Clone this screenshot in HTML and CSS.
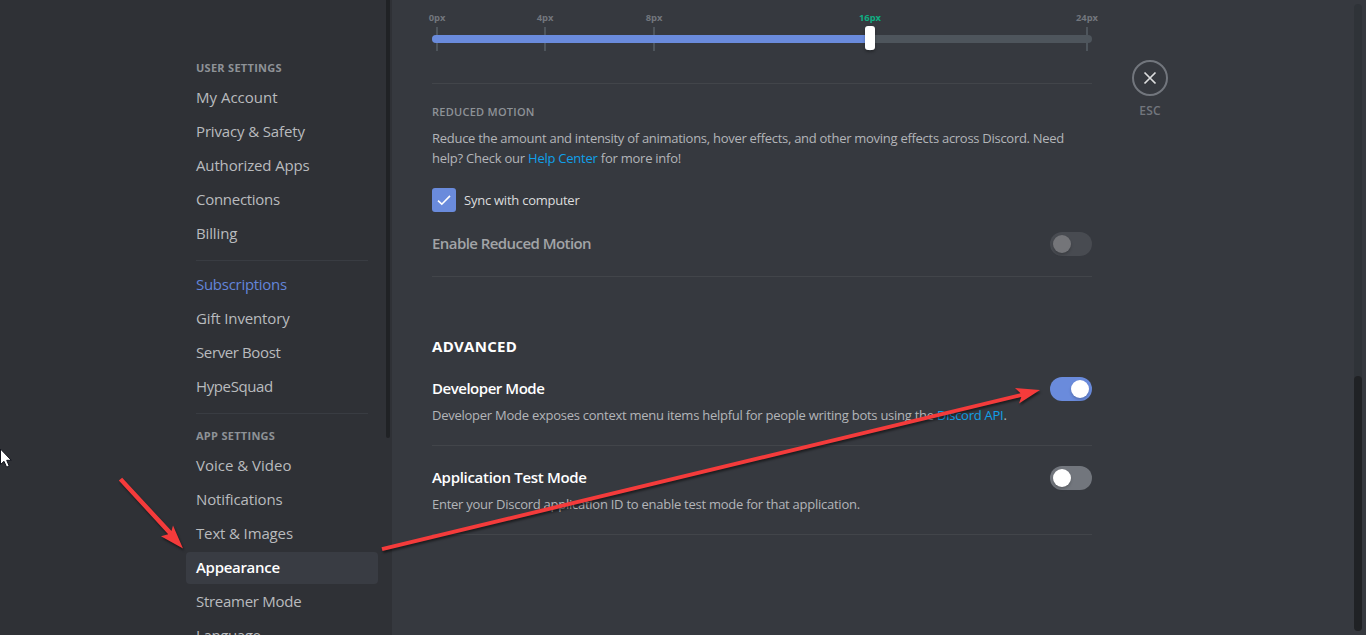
FILE: index.html
```html
<!DOCTYPE html>
<html lang="en">
<head>
<meta charset="utf-8">
<title>User Settings</title>
<link rel="stylesheet" href="styles.css">
</head>
<body>
<div class="app">
  <aside class="sidebar">
    <nav class="nav">
      <div class="nav-header">USER SETTINGS</div>
      <a class="nav-item">My Account</a>
      <a class="nav-item snug">Privacy &amp; Safety</a>
      <a class="nav-item snug">Authorized Apps</a>
      <a class="nav-item tight">Connections</a>
      <a class="nav-item snug">Billing</a>
      <div class="nav-sep"></div>
      <a class="nav-item tight brand">Subscriptions</a>
      <a class="nav-item snug">Gift Inventory</a>
      <a class="nav-item tighter">Server Boost</a>
      <a class="nav-item tighter">HypeSquad</a>
      <div class="nav-sep"></div>
      <div class="nav-header">APP SETTINGS</div>
      <a class="nav-item">Voice &amp; Video</a>
      <a class="nav-item snug">Notifications</a>
      <a class="nav-item snug">Text &amp; Images</a>
      <a class="nav-item snug selected">Appearance</a>
      <a class="nav-item tight">Streamer Mode</a>
      <a class="nav-item tighter">Language</a>
    </nav>
    <div class="side-scroll"></div>
  </aside>

  <main class="content">
    <div class="column">
      <section class="slider">
        <div class="marks">
          <div class="mark m0"><span>0px</span><i></i></div>
          <div class="mark m4"><span>4px</span><i></i></div>
          <div class="mark m8"><span>8px</span><i></i></div>
          <div class="mark m16 current"><span>16px</span><i></i></div>
          <div class="mark m24"><span>24px</span><i></i></div>
        </div>
        <div class="bar"><div class="fill"></div></div>
        <div class="grabber"></div>
      </section>

      <section class="motion">
        <h5 class="eyebrow">REDUCED MOTION</h5>
        <p class="desc"><span class="line1">Reduce the amount and intensity of animations, hover effects, and other moving effects across Discord. Need</span><br>help? Check our <a class="link">Help Center</a> for more info!</p>
        <div class="check-row">
          <span class="checkbox"><svg width="18" height="18" viewBox="0 0 18 18"><polyline points="3,9.6 6.8,13.2 15,4.9" fill="none" stroke="#fff" stroke-width="1.6"/></svg></span>
          <span class="check-label">Sync with computer</span>
        </div>
        <div class="setting disabled">
          <span class="setting-title enable">Enable Reduced Motion</span>
          <span class="switch"><span class="knob"></span></span>
        </div>
      </section>

      <h2 class="advanced">ADVANCED</h2>
      <section class="option first">
        <div class="setting">
          <span class="setting-title dev">Developer Mode</span>
          <span class="switch on"><span class="knob"></span></span>
        </div>
        <p class="desc">Developer Mode exposes context menu items helpful for people writing bots using the <a class="link">Discord API</a>.</p>
      </section>
      <section class="option">
        <div class="setting">
          <span class="setting-title app-test">Application Test Mode</span>
          <span class="switch"><span class="knob"></span></span>
        </div>
        <p class="desc">Enter your Discord application ID to enable test mode for that application.</p>
      </section>
    </div>

    <div class="close">
      <span class="close-ring"><svg width="18" height="18" viewBox="0 0 18 18"><path d="M3.5 3.5 14.5 14.5M14.5 3.5 3.5 14.5" stroke="#dcddde" stroke-width="1.7" fill="none"/></svg></span>
      <span class="esc">ESC</span>
    </div>
    <div class="main-scroll"><div class="thumb"></div></div>
  </main>

  <svg class="annotations" width="1366" height="635" viewBox="0 0 1366 635">
    <g class="arrows">
      <path d="M122.2 477.8 171.5 531 173 525.5 183 548.5 161 536.2 168.2 534.2 118.8 480.5Z"/>
      <path d="M381.5 547.2 1020.5 393.3 1015 388 1040 390 1019 403.5 1021.3 397 382.5 551Z"/>
    </g>
    <path class="cursor" d="M.5 449 .5 464.5 4 461.3 6.6 467.2 9.2 466 6.7 460.3H11.3Z"/>
  </svg>
</div>
</body>
</html>
```
FILE: styles.css
```css
* { box-sizing: border-box; }
body { margin: 0; background: #36393f; font-family: "Open Sans", "Noto Sans", sans-serif; }
h2, h5, p { margin: 0; }

.app { position: relative; display: flex; width: 1366px; height: 635px; overflow: hidden; }

.sidebar { display: flex; justify-content: space-between; width: 392px; height: 635px; padding: 0 2px 0 186px; background: #2f3136; overflow: hidden; flex: none; }
.nav { display: flex; flex-direction: column; width: 192px; padding-top: 54px; }
.nav > * { flex: none; }
.nav-header { height: 28px; padding: 6px 10px; font-size: 11px; line-height: 16px; font-weight: 700; letter-spacing: .28px; color: #8e9297; white-space: nowrap; }
.nav-item { height: 32px; margin-bottom: 2px; padding: 5px 10px 7px; border-radius: 4px; font-size: 15px; line-height: 20px; font-weight: 500; color: #b9bbbe; white-space: nowrap; }
.snug { letter-spacing: -.14px; }
.tight { letter-spacing: -.28px; }
.tighter { letter-spacing: -.38px; }
.brand { color: #6385da; }
.selected { background: #393c43; color: #fff; font-weight: 600; letter-spacing: -.3px; }
.nav-sep { height: 1px; margin: 8px 10px; background: #393c42; }
.side-scroll { width: 4px; height: 438px; border-radius: 0 0 2px 2px; background: #202225; }

.content { display: flex; flex: 1; height: 635px; padding-left: 40px; }
.column { width: 660px; flex: none; }

.slider { position: relative; height: 84px; padding-top: 35px; border-bottom: 1px solid #42454a; }
.bar { position: relative; height: 8px; border-radius: 4px; background: #4e555c; overflow: hidden; }
.fill { width: 438px; height: 8px; background: #6a8bdc; }
.mark { position: absolute; top: 11px; display: flex; flex-direction: column; align-items: center; width: 40px; font-size: 9.4px; line-height: 14px; font-weight: 700; color: #72767d; }
.mark i { width: 2px; height: 24px; margin-top: 2px; background: #4e555c; }
.m0 { left: -15px; }
.m4 { left: 93px; }
.m8 { left: 202px; }
.m16 { left: 418px; }
.m24 { left: 635px; }
.current { color: #0fae82; }
.grabber { position: absolute; left: 433px; top: 26px; width: 10px; height: 24px; border-radius: 3px; background: #fff; box-shadow: 0 2px 3px rgba(0, 0, 0, .3); }

.motion { height: 193px; padding-top: 20px; border-bottom: 1px solid #42454a; }
.eyebrow { font-size: 11px; line-height: 16px; font-weight: 600; letter-spacing: .26px; color: #8e9297; }
.desc { font-size: 13px; line-height: 20px; letter-spacing: -.255px; color: #b3b5b9; white-space: nowrap; }
.motion .desc { margin-top: 8px; letter-spacing: -.24px; }
.motion .line1 { letter-spacing: -.28px; }
.link { color: #10a0e9; }
.check-row { display: flex; align-items: center; gap: 8px; height: 24px; margin-top: 20px; }
.checkbox { display: grid; place-items: center; width: 24px; height: 24px; border-radius: 3px; background: #6a8bdc; }
.check-label { font-size: 13px; font-weight: 500; letter-spacing: -.24px; color: #dcddde; }
.setting { display: flex; justify-content: space-between; align-items: center; height: 24px; }
.setting-title { margin-bottom: 2px; font-size: 15px; line-height: 22px; font-weight: 600; color: #fff; }
.motion .setting { margin-top: 20px; }
.disabled .setting-title { color: #a2a4a7; }
.enable { letter-spacing: -.56px; }
.dev { letter-spacing: -.47px; }
.app-test { letter-spacing: -.3px; }
.switch { display: flex; width: 42px; height: 24px; padding: 3px; border-radius: 12px; background: #72767d; }
.knob { width: 18px; height: 18px; border-radius: 50%; background: #fff; box-shadow: 0 2px 3px rgba(0, 0, 0, .18); }
.on { justify-content: flex-end; background: #6a8bdc; }
.disabled .switch { background: #484b51; }
.disabled .knob { background: #747579; }

.advanced { margin-top: 59px; height: 20px; font-size: 15px; line-height: 20px; font-weight: 700; letter-spacing: .3px; color: #fff; }
.option { height: 89px; padding-top: 20px; border-bottom: 1px solid #42454a; }
.first { height: 90px; padding-top: 21px; }
.option .desc { margin-top: 4px; }

.close { display: flex; flex-direction: column; align-items: center; width: 36px; margin: 60px 0 0 40px; }
.close-ring { display: grid; place-items: center; width: 36px; height: 36px; border: 2px solid #72767d; border-radius: 50%; }
.esc { margin-top: 6px; font-size: 12px; line-height: 18px; font-weight: 600; letter-spacing: .2px; color: #72767d; }
.main-scroll { display: flex; flex-direction: column; justify-content: flex-end; width: 8px; height: 627px; margin: 4px 4px 0 auto; border-radius: 4px; background: #2f3338; }
.thumb { height: 255px; border-radius: 4px; background: #202225; }

.annotations { position: absolute; left: 0; top: 0; pointer-events: none; }
.arrows { fill: #f43b3b; filter: drop-shadow(1px 2px 1px rgba(0, 0, 0, .5)); }
.cursor { fill: #fff; stroke: #11131c; stroke-width: 1; }
```
